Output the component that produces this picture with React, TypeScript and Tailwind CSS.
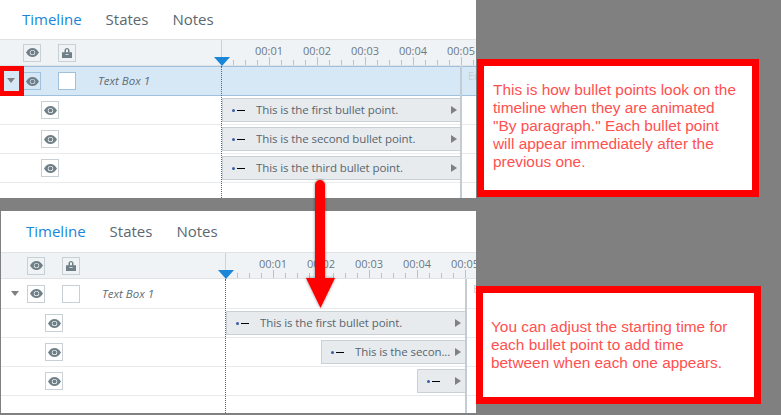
const ui = { fontFamily: '"Open Sans", "Noto Sans", sans-serif' };

function Eye() {
  return (
    <svg width="13" height="9" viewBox="0 0 14 10" preserveAspectRatio="none" aria-hidden="true">
      <path fillRule="evenodd" fill="#6f7f87" d="M0 5C2 1.500 4.300 0 7 0s5 1.500 7 5c-2 3.500-4.300 5-7 5S2 8.500 0 5Zm7-2.900a2.900 2.900 0 1 0 0 5.800 2.900 2.900 0 0 0 0-5.800Z" />
      <circle cx="7" cy="5" r="2.200" fill="#6f7f87" />
    </svg>
  );
}

function Lock() {
  return (
    <svg width="10" height="10" viewBox="0 0 12 12" aria-hidden="true">
      <path fillRule="evenodd" fill="#6f7f87" d="M3 5V2.800C3 1.200 4.300 0 6 0s3 1.200 3 2.800V5h3v7H0V5h3Zm1.800 0h2.400V2.800C7.200 2.100 6.700 1.600 6 1.600s-1.200.5-1.200 1.200V5ZM4 7.500v1h4v-1H4Z" />
    </svg>
  );
}

function IconBox({ selected, filled, children }: { selected?: boolean; filled?: boolean; children?: React.ReactNode }) {
  return (
    <div className={`flex h-[18px] w-[18px] shrink-0 items-center justify-center border ${selected ? "border-[#9fc1dd]" : "border-[#c8d0d6]"} ${filled ? "bg-white" : ""}`}>
      {children}
    </div>
  );
}

function Ruler() {
  const ticks = Array.from({ length: 24 }, (_, i) => i);
  return (
    <svg width="260" height="9" viewBox="0 0 260 9" className="absolute bottom-0 left-0" aria-hidden="true">
      {ticks.map((i) => {
        const x = 11.5 + i * 12;
        const big = (i + 1) % 4 === 0;
        return <line key={i} x1={x} x2={x} y1={big ? 1 : 4} y2={9} stroke="#b9c2c8" strokeWidth="1" />;
      })}
    </svg>
  );
}

function Bar({ offset, label }: { offset: string; label?: string }) {
  return (
    <div className={`flex h-[24px] w-full items-center ${offset}`}>
      <div className="flex h-[24px] min-w-0 flex-1 items-center border-y border-l border-[#c9d1d6] bg-[#e7ebee]">
        <span className="ml-[9px] h-[3px] w-[3px] shrink-0 rounded-full bg-[#3b5ca8]" />
        <span className="ml-[2px] h-px w-[8px] shrink-0 bg-black" />
        {label ? (
          <span className="ml-[11px] min-w-0 flex-1 truncate text-[11.5px] tracking-[-0.1px] text-[#58666e]">{label}</span>
        ) : (
          <span className="flex-1" />
        )}
        <span className="mr-[4px] ml-[2px] h-0 w-0 shrink-0 border-y-[4px] border-l-[6px] border-y-transparent border-l-[#808080]" />
      </div>
    </div>
  );
}

function Panel({
  height,
  tabs,
  first,
  inset,
  split,
  bars,
  selected,
  end,
}: {
  height: string;
  tabs: string;
  first: string;
  inset: string;
  split: string;
  bars: { offset: string; label?: string }[];
  selected?: boolean;
  end: string;
}) {
  return (
    <section className={`relative flex w-full flex-col overflow-hidden bg-white ${height}`} style={ui}>
      <nav className={`flex ${tabs} shrink-0 items-center gap-[24px] ${first} text-[15px]`}>
        <span className="text-[#1a86d8]">Timeline</span>
        <span className="text-[#5b6870]">States</span>
        <span className="text-[#5b6870]">Notes</span>
      </nav>

      <header className="flex h-[27px] shrink-0 border-y border-[#dfe3e6] bg-[#f0f3f6]">
        <div className={`flex ${split} shrink-0 items-center gap-[17px] border-r border-[#ccd2d6] ${inset}`}>
          <IconBox><Eye /></IconBox>
          <IconBox><Lock /></IconBox>
        </div>
        <div className="relative min-w-0 flex-1">
          <div className="flex pl-[23px] pt-[3px] text-[11px] leading-[15px] text-[#6b7a83]">
            {["00:01", "00:02", "00:03", "00:04", "00:05"].map((t) => (
              <span key={t} className="w-[48px] shrink-0 text-center">{t}</span>
            ))}
          </div>
          <Ruler />
        </div>
      </header>

      <div className={`flex h-[30px] shrink-0 items-center ${selected ? "border-y border-[#9fc1dd] bg-[#d6e7f6]" : "border-b border-[#e8eaec]"}`}>
        <div className={`flex ${split} shrink-0 items-center ${inset}`}>
          <IconBox selected={selected}><Eye /></IconBox>
          <div className="ml-[17px]"><IconBox selected={selected} filled /></div>
          <span className="ml-[22px] text-[11.5px] italic text-[#5f6c74]">Text Box 1</span>
        </div>
      </div>

      {bars.map((b, i) => (
        <div key={i} className="flex h-[29px] shrink-0 items-center border-b border-[#e8eaec]">
          <div className={`flex ${split} shrink-0 items-center ${inset}`}>
            <div className="ml-[18px]"><IconBox><Eye /></IconBox></div>
          </div>
          <div className={`min-w-0 ${end}`}>
            <Bar offset={b.offset} label={b.label} />
          </div>
        </div>
      ))}

      {/* overlays: playhead, its dotted line, and the end-of-timeline rule */}
      <div className={`pointer-events-none absolute bottom-0 ${selected ? "top-[66px] left-[221px]" : "top-[68px] left-[224px]"} border-l border-dotted border-[#1a78c0]`} />
      <div className={`pointer-events-none absolute ${selected ? "top-[57px] left-[214px]" : "top-[59px] left-[217px]"} h-0 w-0 border-x-[8px] border-t-[9px] border-x-transparent border-t-[#1a86d8]`} />
      <div className={`pointer-events-none absolute bottom-0 ${selected ? "top-[66px] left-[460px]" : "top-[68px] left-[464px]"} w-[2px] bg-[#c3ccd3]`} />
      <span className={`absolute ${selected ? "top-[68px] left-[468px]" : "top-[70px] left-[472px]"} text-[11px] text-[#c5ced4]`}>En</span>
      <div className={`absolute h-0 w-0 border-x-[4px] border-t-[5px] border-x-transparent border-t-[#808080] ${selected ? "top-[78px] left-[7px]" : "top-[80px] left-[10px]"}`} />
    </section>
  );
}

function Callout({ className, children }: { className: string; children: React.ReactNode }) {
  return (
    <aside className={`border-[7px] border-[#ff0000] bg-white text-[15.4px] leading-[18px] text-[#ff5050] ${className}`} style={{ fontFamily: '"Liberation Sans", Arial, sans-serif' }}>
      {children}
    </aside>
  );
}

export default function App() {
  return (
    <main className="relative flex h-[415px] w-[781px] overflow-hidden bg-[#808080]">
      <div className="flex w-[476px] shrink-0 flex-col gap-[13px]">
        <Panel
          height="h-[198px]"
          tabs="h-[39px]"
          first="pl-[22px]"
          inset="pl-[23px]"
          split="w-[222px]"
          selected
          end="w-[239px]"
          bars={[
            { offset: "", label: "This is the first bullet point." },
            { offset: "", label: "This is the second bullet point." },
            { offset: "", label: "This is the third bullet point." },
          ]}
        />
        <div className="pl-px">
          <Panel
            height="h-[202px]"
            tabs="h-[41px]"
            first="pl-[25px]"
            inset="pl-[26px]"
            split="w-[225px]"
            end="w-[239px]"
            bars={[
              { offset: "", label: "This is the first bullet point." },
              { offset: "pl-[95px]", label: "This is the secon..." },
              { offset: "pl-[191px]" },
            ]}
          />
        </div>
      </div>

      <div className="flex flex-1 flex-col">
        <Callout className="mt-[59px] ml-px h-[138px] w-[282px] pt-[15px] pl-[9px]">
          This is how bullet points look on the<br />
          timeline when they are animated<br />
          "By paragraph." Each bullet point<br />
          will appear immediately after the<br />
          previous one.
        </Callout>
        <Callout className="mt-[89px] h-[118px] w-[285px] pt-[25px] pl-[8px]">
          You can adjust the starting time for<br />
          each bullet point to add time<br />
          between when each one appears.
        </Callout>
      </div>

      {/* annotations drawn over the screenshots */}
      <div className="pointer-events-none absolute top-[66px] left-0 h-[30px] w-[24px] border-[5px] border-l-[4px] border-[#ff0000]" />
      <svg className="pointer-events-none absolute top-[178px] left-[300px]" width="42" height="136" viewBox="0 0 42 136" aria-hidden="true">
        <defs>
          <filter id="s" x="-30%" y="-10%" width="160%" height="120%">
            <feDropShadow dx="0" dy="0" stdDeviation="1.500" floodColor="#000" floodOpacity="0.450" />
          </filter>
        </defs>
        <path filter="url(#s)" fill="#ff0000" d="M15 7a5 5 0 0 1 10 0v93h10l-14.500 30L6 100h9Z" />
      </svg>
    </main>
  );
}
